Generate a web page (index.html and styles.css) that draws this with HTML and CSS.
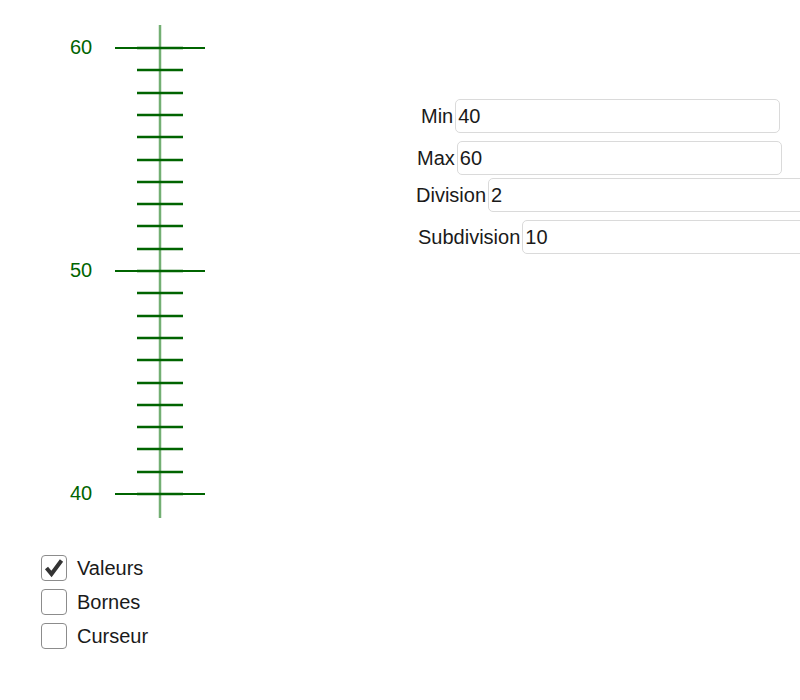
FILE: index.html
```html
<!DOCTYPE html>
<html lang="fr">
<head>
    <meta charset="UTF-8">
    <title>Graduation</title>
    <link rel="stylesheet" href="styles.css">
</head>
<body>
    <div class="applet">
        <svg class="ruler" width="800" height="700" viewBox="0 0 800 700">
            <line class="axis" x1="160" y1="25" x2="160" y2="518"/>
            <g class="major">
                <line x1="115" y1="48" x2="205" y2="48"/>
                <line x1="115" y1="271" x2="205" y2="271"/>
                <line x1="115" y1="494" x2="205" y2="494"/>
            </g>
            <g class="minor" id="minor"></g>
            <g class="labels">
                <text x="70" y="54">60</text>
                <text x="70" y="277">50</text>
                <text x="70" y="500">40</text>
            </g>
        </svg>

        <div class="field field-min">
            <label>Min</label>
            <input type="text" value="40">
        </div>
        <div class="field field-max">
            <label>Max</label>
            <input type="text" value="60">
        </div>
        <div class="field field-div">
            <label>Division</label>
            <input type="text" value="2">
        </div>
        <div class="field field-sub">
            <label>Subdivision</label>
            <input type="text" value="10">
        </div>

        <div class="checks">
            <div class="check">
                <span class="box checked">
                    <svg width="22" height="22" viewBox="0 0 22 22"><path d="M3.5 11 L8.5 17 L18.5 3.5"/></svg>
                </span>
                <span>Valeurs</span>
            </div>
            <div class="check">
                <span class="box"></span>
                <span>Bornes</span>
            </div>
            <div class="check">
                <span class="box"></span>
                <span>Curseur</span>
            </div>
        </div>
    </div>

    <script>
        // minor ticks, 20 steps between 60 and 40
        var ticks = document.getElementById('minor');
        var startY = 48, step = (494 - 48) / 20;
        for (var k = 0; k <= 20; k++) {
            var y = Math.round(startY + k * step);
            var l = document.createElementNS('http://www.w3.org/2000/svg', 'line');
            l.setAttribute('x1', 137);
            l.setAttribute('x2', 183);
            l.setAttribute('y1', y);
            l.setAttribute('y2', y);
            ticks.appendChild(l);
        }
    </script>
</body>
</html>
```

FILE: styles.css
```css
body {
    margin: 0;
    background-color: #ffffff;
    font-family: "Liberation Sans", Arial, sans-serif;
}

.applet {
    position: relative;
    width: 800px;
    height: 700px;
    overflow: hidden;
}

.ruler {
    display: block;
}

.axis {
    stroke: rgba(0, 110, 0, 0.55);
    stroke-width: 2.5;
}

.major line {
    stroke: #006400;
    stroke-width: 2;
}

.minor line {
    stroke: #006400;
    stroke-width: 2.6;
}

.labels text {
    fill: #006400;
    font-family: "Liberation Sans", Arial, sans-serif;
    font-size: 20px;
}

.field {
    position: absolute;
    display: flex;
    align-items: center;
    height: 34px;
}

.field label {
    font-size: 20px;
    color: #1a1a1a;
    margin-right: 2px;
}

.field input {
    height: 34px;
    box-sizing: border-box;
    border: 1px solid #dadada;
    border-radius: 5px;
    padding: 0 2px;
    font-family: "Liberation Sans", Arial, sans-serif;
    font-size: 20px;
    color: #1a1a1a;
    background: #ffffff;
    outline: none;
}

.field-min {
    left: 421px;
    top: 99px;
}

.field-min input {
    width: 325px;
}

.field-max {
    left: 417px;
    top: 141px;
}

.field-max input {
    width: 325px;
}

.field-div {
    left: 416px;
    top: 178px;
}

.field-div input {
    width: 340px;
}

.field-sub {
    left: 418px;
    top: 220px;
}

.field-sub input {
    width: 300px;
}

.checks {
    position: absolute;
    left: 41px;
    top: 555px;
    display: flex;
    flex-direction: column;
    gap: 8px;
}

.check {
    display: flex;
    align-items: center;
    gap: 10px;
    height: 26px;
    font-size: 20px;
    color: #1a1a1a;
}

.box {
    width: 24px;
    height: 24px;
    border: 1px solid #8c8c8c;
    border-radius: 4px;
    display: flex;
    align-items: center;
    justify-content: center;
}

.box path {
    fill: none;
    stroke: #333333;
    stroke-width: 4;
}
```
